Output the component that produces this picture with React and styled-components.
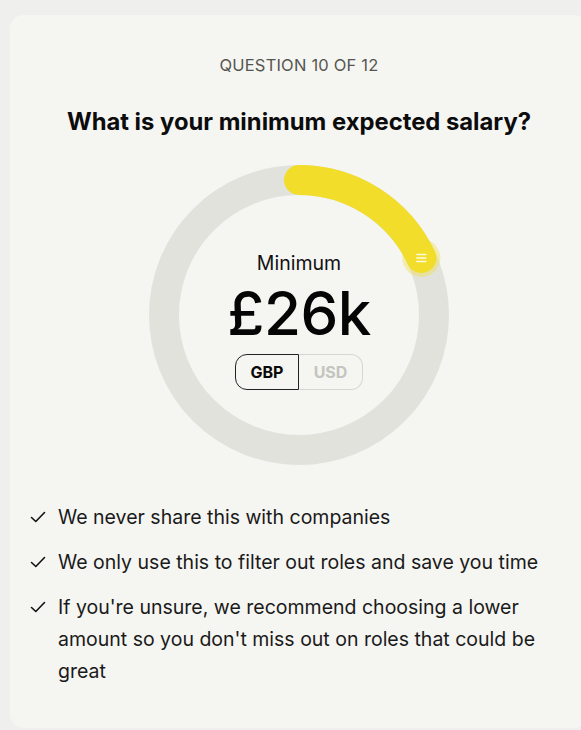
import React from "react";
import styled, { createGlobalStyle } from "styled-components";

const Global = createGlobalStyle`
  html, body { margin: 0; padding: 0; background: #efefed; overflow: hidden; }
  body { font-family: "Inter", "Noto Sans", sans-serif; color: #111; }
`;

const Page = styled.div`
  padding: 15px 0 0 10px;
  height: 730px;
  box-sizing: border-box;
`;

const Card = styled.div`
  width: 578px;
  height: 713px;
  background: #f5f5f2;
  border-radius: 14px;
  box-sizing: border-box;
  padding: 40px 20px 0 20px;
  display: flex;
  flex-direction: column;
  align-items: center;
`;

const Eyebrow = styled.div`
  font-size: 16.5px;
  letter-spacing: 0.2px;
  color: #555550;
  font-weight: 400;
  line-height: 20px;
  text-transform: uppercase;
`;

const Title = styled.h1`
  margin: 33px 0 0 0;
  font-size: 23.8px;
  line-height: 28px;
  font-weight: 700;
  color: #0c0c0c;
  white-space: nowrap;
`;

const Dial = styled.div`
  position: relative;
  width: 300px;
  height: 300px;
  margin-top: 29px;
  display: flex;
  flex-direction: column;
  align-items: center;
  justify-content: center;
`;

const Ring = styled.svg`
  position: absolute;
  inset: 0;
`;

const Center = styled.div`
  position: relative;
  display: flex;
  flex-direction: column;
  align-items: center;
  margin-top: 10px;
`;

const Label = styled.div`
  font-size: 19.5px;
  line-height: 24px;
  color: #111;
  margin-bottom: 2px;
`;

const Amount = styled.div`
  font-size: 60px;
  line-height: 62px;
  font-weight: 500;
  letter-spacing: -0.5px;
  margin-top: 5px;
  color: #050505;
`;

const Toggle = styled.div`
  display: flex;
  margin-top: 10px;
`;

const Opt = styled.button`
  width: 64px;
  height: 36px;
  box-sizing: border-box;
  font-family: "Inter", sans-serif;
  font-size: 16px;
  font-weight: 700;
  background: transparent;
  cursor: pointer;
  border: 1px solid ${(p) => (p.$active ? "#222" : "#d6d6d2")};
  color: ${(p) => (p.$active ? "#0a0a0a" : "#c4c4c0")};
  border-radius: ${(p) => (p.$left ? "12px 0 0 12px" : "0 12px 12px 0")};
  ${(p) => (p.$left ? "" : "border-left: none;")}
`;

const List = styled.ul`
  list-style: none;
  margin: 36px 0 0 0;
  padding: 0;
  align-self: stretch;
  display: flex;
  flex-direction: column;
  gap: 13px;
`;

const Item = styled.li`
  display: flex;
  align-items: flex-start;
  gap: 12px;
  font-size: 19.5px;
  line-height: 32px;
  color: #1a1a1a;
  padding-right: 20px;
`;

const Check = styled.svg`
  flex: none;
  margin-top: 8px;
`;

const CheckIcon = () => (
  <Check width="16" height="16" viewBox="0 0 16 16" fill="none">
    <path d="M1.5 8.5 L5.8 12.5 L14.5 3.5" stroke="#111" strokeWidth="1.6" strokeLinecap="round" strokeLinejoin="round" />
  </Check>
);

const R = 135;
const C = 150;
const angle = 65;
const rad = (angle * Math.PI) / 180;
const ex = C + R * Math.sin(rad);
const ey = C - R * Math.cos(rad);

export default function App() {
  return (
    <>
      <Global />
      <Page>
        <Card>
          <Eyebrow>Question 10 of 12</Eyebrow>
          <Title>What is your minimum expected salary?</Title>
          <Dial>
            <Ring width="300" height="300" viewBox="0 0 300 300">
              <circle cx={C} cy={C} r={R} fill="none" stroke="#e2e2dd" strokeWidth="30" />
              <path
                d={`M ${C} ${C - R} A ${R} ${R} 0 0 1 ${ex} ${ey}`}
                fill="none"
                stroke="#f1dd2a"
                strokeWidth="30"
                strokeLinecap="round"
              />
              <circle cx={ex} cy={ey} r="19" fill="#f1dd2a" opacity="0.35" />
              <circle cx={ex} cy={ey} r="14" fill="#f1dd2a" />
              <g stroke="#fffbe0" strokeWidth="1.4" strokeLinecap="round">
                <line x1={ex - 4.5} y1={ey - 3.5} x2={ex + 4.5} y2={ey - 3.5} />
                <line x1={ex - 4.5} y1={ey} x2={ex + 4.5} y2={ey} />
                <line x1={ex - 4.5} y1={ey + 3.5} x2={ex + 4.5} y2={ey + 3.5} />
              </g>
            </Ring>
            <Center>
              <Label>Minimum</Label>
              <Amount>£26k</Amount>
              <Toggle>
                <Opt $active $left>GBP</Opt>
                <Opt>USD</Opt>
              </Toggle>
            </Center>
          </Dial>
          <List>
            <Item><CheckIcon />We never share this with companies</Item>
            <Item><CheckIcon />We only use this to filter out roles and save you time</Item>
            <Item><CheckIcon />If you're unsure, we recommend choosing a lower amount so you don't miss out on roles that could be great</Item>
          </List>
        </Card>
      </Page>
    </>
  );
}
